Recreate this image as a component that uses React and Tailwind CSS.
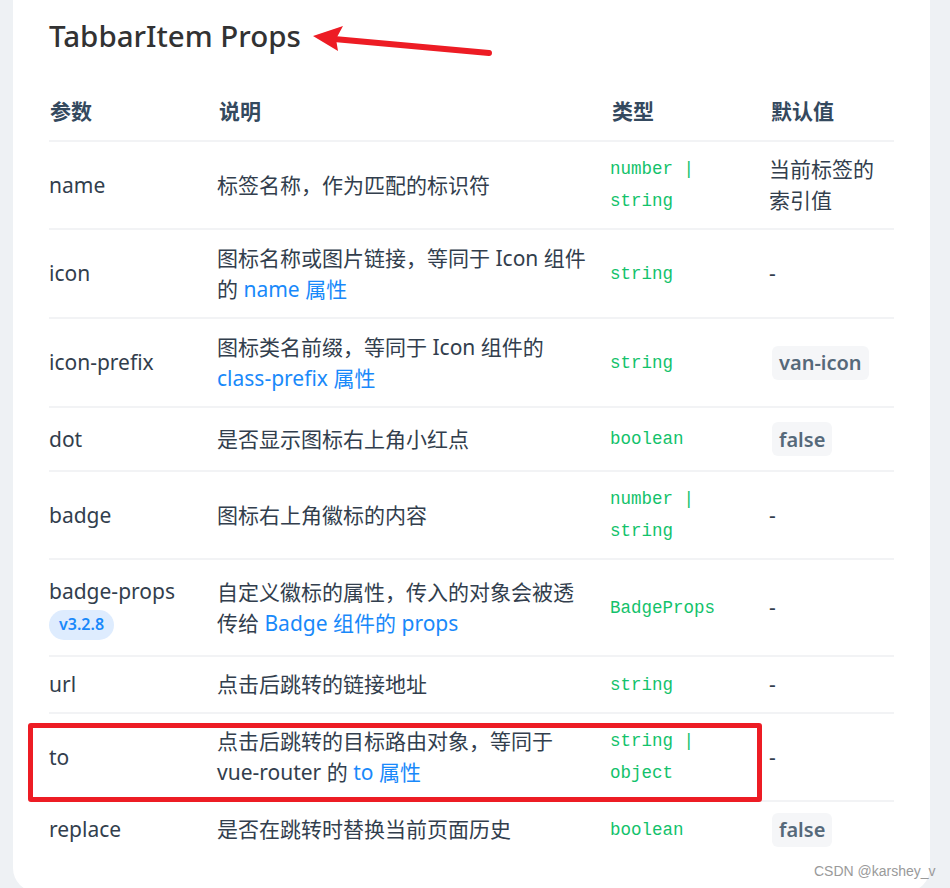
const Link = ({ children }) => <span className="text-[#1989fa]">{children}</span>;

const Chip = ({ children }) => (
  <span className="ml-[3px] inline-flex h-[34px] items-center rounded-[6px] bg-[#f5f6f8] px-[7px] text-[20px] font-semibold text-[#56697a]">
    {children}
  </span>
);

const rows = [
  {
    name: 'name',
    h: 'h-[88px]',
    desc: '标签名称，作为匹配的标识符',
    type: 'number | string',
    def: '当前标签的索引值',
  },
  {
    name: 'icon',
    h: 'h-[89px]',
    desc: (
      <>
        图标名称或图片链接，等同于 Icon 组件的 <Link>name 属性</Link>
      </>
    ),
    type: 'string',
    def: '-',
  },
  {
    name: 'icon-prefix',
    h: 'h-[89px]',
    desc: (
      <>
        图标类名前缀，等同于 Icon 组件的 <Link>class-prefix 属性</Link>
      </>
    ),
    type: 'string',
    def: <Chip>van-icon</Chip>,
  },
  {
    name: 'dot',
    h: 'h-[64px]',
    desc: '是否显示图标右上角小红点',
    type: 'boolean',
    def: <Chip>false</Chip>,
  },
  {
    name: 'badge',
    h: 'h-[88px]',
    desc: '图标右上角徽标的内容',
    type: 'number | string',
    def: '-',
  },
  {
    name: 'badge-props',
    version: 'v3.2.8',
    h: 'h-[97px]',
    desc: (
      <>
        自定义徽标的属性，传入的对象会被透传给 <Link>Badge 组件的 props</Link>
      </>
    ),
    type: 'BadgeProps',
    def: '-',
  },
  {
    name: 'url',
    h: 'h-[57px]',
    desc: '点击后跳转的链接地址',
    type: 'string',
    def: '-',
  },
  {
    name: 'to',
    h: 'h-[88px]',
    desc: (
      <>
        点击后跳转的目标路由对象，等同于 vue-router 的 <Link>to 属性</Link>
      </>
    ),
    type: 'string | object',
    def: '-',
  },
  {
    name: 'replace',
    h: 'h-[57px]',
    desc: '是否在跳转时替换当前页面历史',
    type: 'boolean',
    def: <Chip>false</Chip>,
  },
];

export default function App() {
  return (
    <div className="relative h-[888px] overflow-hidden bg-[#eef1f4] font-['Noto_Sans','Noto_Sans_CJK_SC',sans-serif]">
      {/* ── Doc card ── */}
      <div className="ml-[13px] w-[917px] rounded-b-[24px] bg-white px-[36px] pt-[18px] pb-[35px]">
        <h1 className="text-[29.5px] leading-[36px] font-medium text-[#323233]">
          TabbarItem Props
        </h1>

        <div className="mt-[28px]">
          {/* header */}
          <div className="grid h-[58px] grid-cols-[168px_393px_159px_125px] items-center text-[21px] leading-[31px] font-bold text-[#34495e]">
            <div className="pl-[1px]">参数</div>
            <div className="pl-[2px]">说明</div>
            <div className="pl-[2px]">类型</div>
            <div className="pl-[2px]">默认值</div>
          </div>

          {/* rows */}
          {rows.map((row) => (
            <div
              key={row.name}
              className={`grid grid-cols-[168px_393px_159px_125px] items-center border-t-2 border-[#f2f3f5] text-[21px] leading-[31px] text-[#323e4d] ${row.h}`}
            >
              <div className="flex flex-col items-start pr-3">
                <span>{row.name}</span>
                {row.version && (
                  <span className="mt-[3px] inline-flex h-[30px] items-center rounded-full bg-[#deecfe] px-[10px] text-[16px] font-semibold text-[#1989fa]">
                    {row.version}
                  </span>
                )}
              </div>
              <div className="pr-[21px]">{row.desc}</div>
              <div className="pr-3 font-['Liberation_Mono',monospace] text-[17.5px] leading-[32px] text-[#13c26b]">
                {row.type}
              </div>
              <div className="pr-[10px]">{row.def}</div>
            </div>
          ))}
        </div>
      </div>

      {/* ── Annotation: arrow ── */}
      <svg
        className="absolute left-[300px] top-[15px]"
        width="200"
        height="50"
        viewBox="300 15 200 50"
      >
        <line x1="489" y1="53" x2="334" y2="39" stroke="#ed1c24" strokeWidth="6" strokeLinecap="round" />
        <polygon points="313,36 343,26 336,39 338,51" fill="#ed1c24" />
      </svg>

      {/* ── Annotation: box ── */}
      <div className="absolute left-[28px] top-[723px] h-[79px] w-[734px] rounded-[3px] border-[5px] border-[#ed1c24]" />

      {/* ── Watermark ── */}
      <div className="absolute left-[814px] top-[863px] font-['Liberation_Sans',sans-serif] text-[14px] leading-[16px] text-[#9a9a9a]">
        CSDN @karshey_v
      </div>
    </div>
  );
}
